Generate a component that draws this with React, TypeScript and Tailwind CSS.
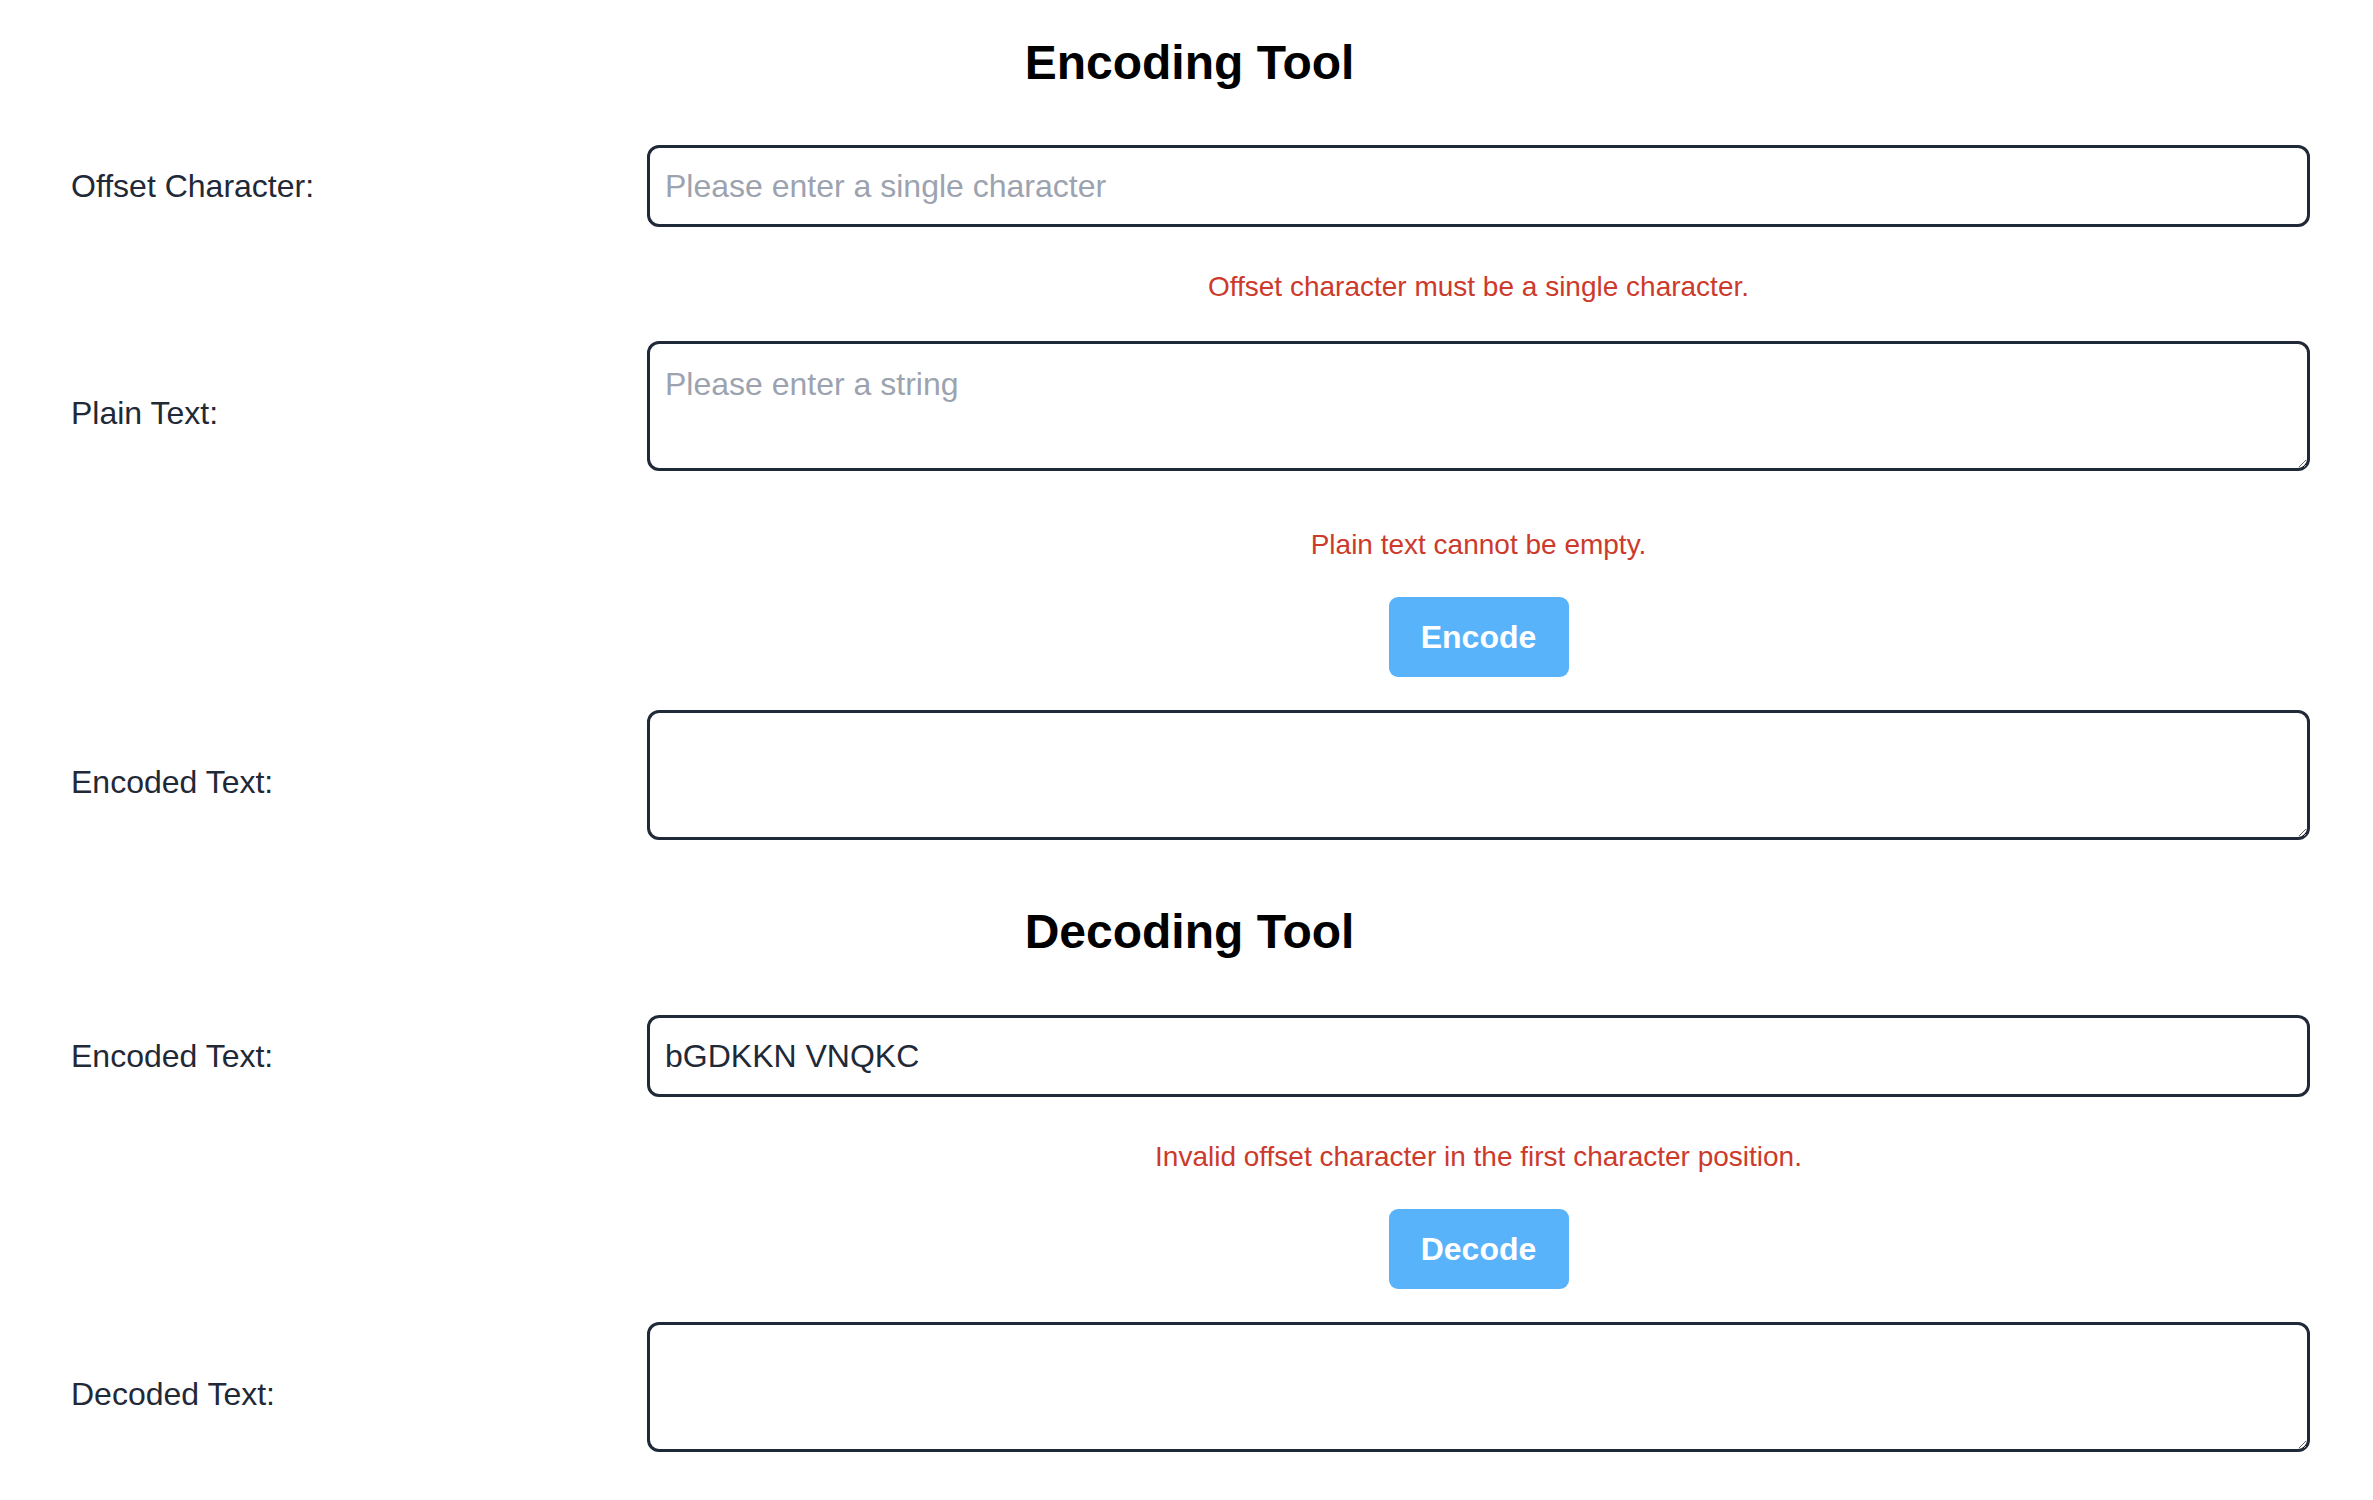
import React from "react";

const font = { fontFamily: '"Liberation Sans", Arial, Helvetica, sans-serif' };

function Label({ children }: { children: React.ReactNode }) {
  return (
    <div className="w-[578px] shrink-0 pl-[2px] text-[32px] leading-[48px] text-[#1f2937]">
      {children}
    </div>
  );
}

function InputRow({ label, placeholder, value }: { label: string; placeholder?: string; value?: string }) {
  return (
    <div className="flex items-center">
      <Label>{label}</Label>
      <div className="flex-1">
        <input
          type="text"
          placeholder={placeholder}
          defaultValue={value}
          className="block w-full h-[82px] border-[3px] border-[#1f2937] rounded-[12px] px-[15px] text-[32px] text-[#1f2937] placeholder:text-[#9ca3af] bg-white outline-none"
          style={font}
        />
      </div>
    </div>
  );
}

function TextareaRow({ label, placeholder }: { label: string; placeholder?: string }) {
  return (
    <div className="flex items-center">
      <Label>{label}</Label>
      <div className="flex-1 pb-[14px]">
        <textarea
          placeholder={placeholder}
          className="block w-full h-[130px] border-[3px] border-[#1f2937] rounded-[12px] px-[15px] py-[16px] text-[32px] leading-[1.5] text-[#1f2937] placeholder:text-[#9ca3af] bg-white outline-none"
          style={font}
        />
      </div>
    </div>
  );
}

function ErrorRow({ text }: { text: string }) {
  return (
    <div className="flex mt-[39px]">
      <div className="w-[578px] shrink-0" />
      <div className="flex-1 text-center text-[28px] leading-[42px] text-[#cc3a2c]">{text}</div>
    </div>
  );
}

function ButtonRow({ text }: { text: string }) {
  return (
    <div className="flex mt-[31px]">
      <div className="w-[578px] shrink-0" />
      <div className="flex-1 flex justify-center">
        <button
          className="w-[180px] h-[80px] rounded-[9px] bg-[#59b3fa] text-white text-[32px] font-bold"
          style={font}
        >
          {text}
        </button>
      </div>
    </div>
  );
}

export default function App() {
  return (
    <div className="min-h-[1500px] bg-white pl-[69px] pr-[63px]" style={font}>
      <h1 className="pt-[27px] text-center text-[48px] leading-[72px] font-bold text-black">Encoding Tool</h1>
      <div className="mt-[46px]">
        <InputRow label="Offset Character:" placeholder="Please enter a single character" />
      </div>
      <ErrorRow text="Offset character must be a single character." />
      <div className="mt-[33px]">
        <TextareaRow label="Plain Text:" placeholder="Please enter a string" />
      </div>
      <ErrorRow text="Plain text cannot be empty." />
      <ButtonRow text="Encode" />
      <div className="mt-[33px]">
        <TextareaRow label="Encoded Text:" />
      </div>
      <h1 className="mt-[42px] text-center text-[48px] leading-[72px] font-bold text-black">Decoding Tool</h1>
      <div className="mt-[47px]">
        <InputRow label="Encoded Text:" value="bGDKKN VNQKC" />
      </div>
      <ErrorRow text="Invalid offset character in the first character position." />
      <ButtonRow text="Decode" />
      <div className="mt-[33px]">
        <TextareaRow label="Decoded Text:" />
      </div>
    </div>
  );
}
